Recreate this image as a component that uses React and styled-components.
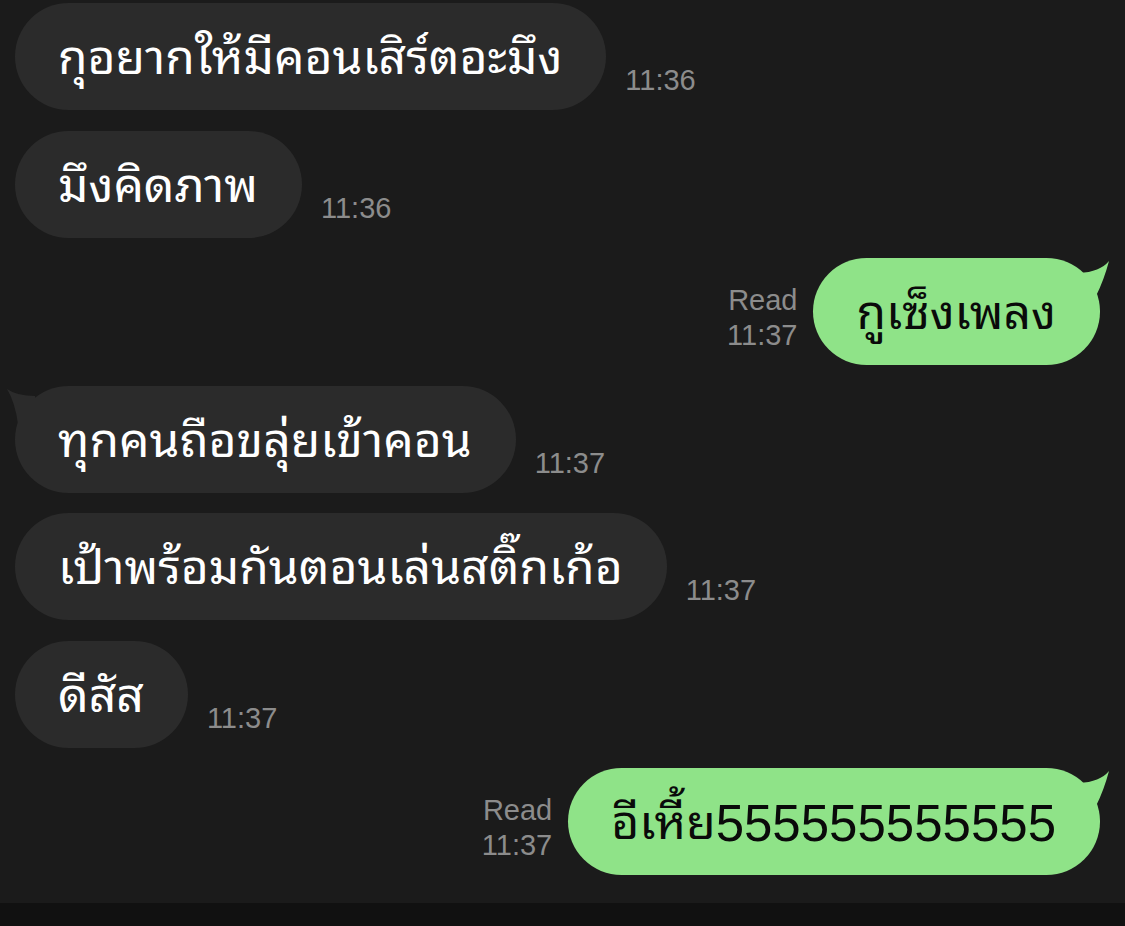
import React from "react";
import styled, { createGlobalStyle } from "styled-components";

const GlobalStyle = createGlobalStyle`
  html, body {
    margin: 0;
    padding: 0;
    background: #1b1b1b;
  }
  body {
    font-family: "Liberation Sans", "Noto Sans Thai Looped", "Noto Sans Thai", sans-serif;
  }
`;

const messages = [
  { id: 1, mine: false, text: "กุอยากให้มีคอนเสิร์ตอะมึง", time: "11:36" },
  { id: 2, mine: false, text: "มึงคิดภาพ", time: "11:36" },
  { id: 3, mine: true, text: "กูเซ็งเพลง", time: "11:37", tail: true },
  { id: 4, mine: false, text: "ทุกคนถือขลุ่ยเข้าคอน", time: "11:37", tail: true },
  { id: 5, mine: false, text: "เป้าพร้อมกันตอนเล่นสติ๊กเก้อ", time: "11:37" },
  { id: 6, mine: false, text: "ดีสัส", time: "11:37" },
  { id: 7, mine: true, text: "อีเหี้ย555555555555", time: "11:37", tail: true },
];

// digits render a touch narrower than the phone font, so give them their own run
const renderText = (text) =>
  text.split(/(\d+)/).map((part, i) =>
    /^\d+$/.test(part) ? <Num key={i}>{part}</Num> : part
  );

export default function App() {
  return (
    <>
      <GlobalStyle />
      <Screen>
        <Chat>
          {messages.map((m) => (
            <Row key={m.id} $mine={m.mine}>
              {m.mine ? (
                <>
                  <Meta>
                    <span>Read</span>
                    <span>{m.time}</span>
                  </Meta>
                  <Bubble $mine>
                    {m.tail && <MyTail />}
                    {renderText(m.text)}
                  </Bubble>
                </>
              ) : (
                <>
                  <Bubble>
                    {m.tail && <TheirTail />}
                    {renderText(m.text)}
                  </Bubble>
                  <Meta>
                    <span>{m.time}</span>
                  </Meta>
                </>
              )}
            </Row>
          ))}
        </Chat>
        <InputStrip />
      </Screen>
    </>
  );
}

const MyTail = () => (
  <TailSvg $mine viewBox="0 0 36 40" width="36" height="40">
    <path d="M3 15 Q24 14 33 3 Q28 22 20 38 L3 38 Z" fill="#8fe388" />
  </TailSvg>
);

const TheirTail = () => (
  <TailSvg viewBox="0 0 36 40" width="36" height="40">
    <path d="M2 3 Q12 10 30 10 L30 38 L13 38 Q10 16 2 3 Z" fill="#2b2b2b" />
  </TailSvg>
);

const Screen = styled.div`
  width: 1125px;
  height: 926px;
  display: flex;
  flex-direction: column;
  background: #1b1b1b;
  overflow: hidden;
`;

const Chat = styled.div`
  flex: 1;
  display: flex;
  flex-direction: column;
  gap: 20.5px;
  padding: 3px 25px 0 15px;
`;

const Row = styled.div`
  display: flex;
  align-items: flex-end;
  justify-content: ${(p) => (p.$mine ? "flex-end" : "flex-start")};
  gap: ${(p) => (p.$mine ? "16px" : "19px")};
`;

const Bubble = styled.div`
  position: relative;
  height: 107px;
  box-sizing: border-box;
  display: flex;
  align-items: center;
  padding: 3px 44px 0 43px;
  border-radius: 54px;
  background: ${(p) => (p.$mine ? "#8fe388" : "#2b2b2b")};
  color: ${(p) => (p.$mine ? "#0a0a0a" : "#ffffff")};
  font-size: 48px;
  line-height: 1;
  white-space: nowrap;
`;

const Num = styled.span`
  font-size: 51px;
`;

const TailSvg = styled.svg`
  position: absolute;
  top: 0;
  ${(p) => (p.$mine ? "right: -12px;" : "left: -10px;")}
`;

const Meta = styled.div`
  display: flex;
  flex-direction: column;
  align-items: flex-end;
  margin-bottom: 12px;
  color: #8c8c8c;
  font-size: 29px;
  line-height: 35px;
`;

const InputStrip = styled.div`
  height: 23px;
  flex: none;
  background: #111111;
`;
